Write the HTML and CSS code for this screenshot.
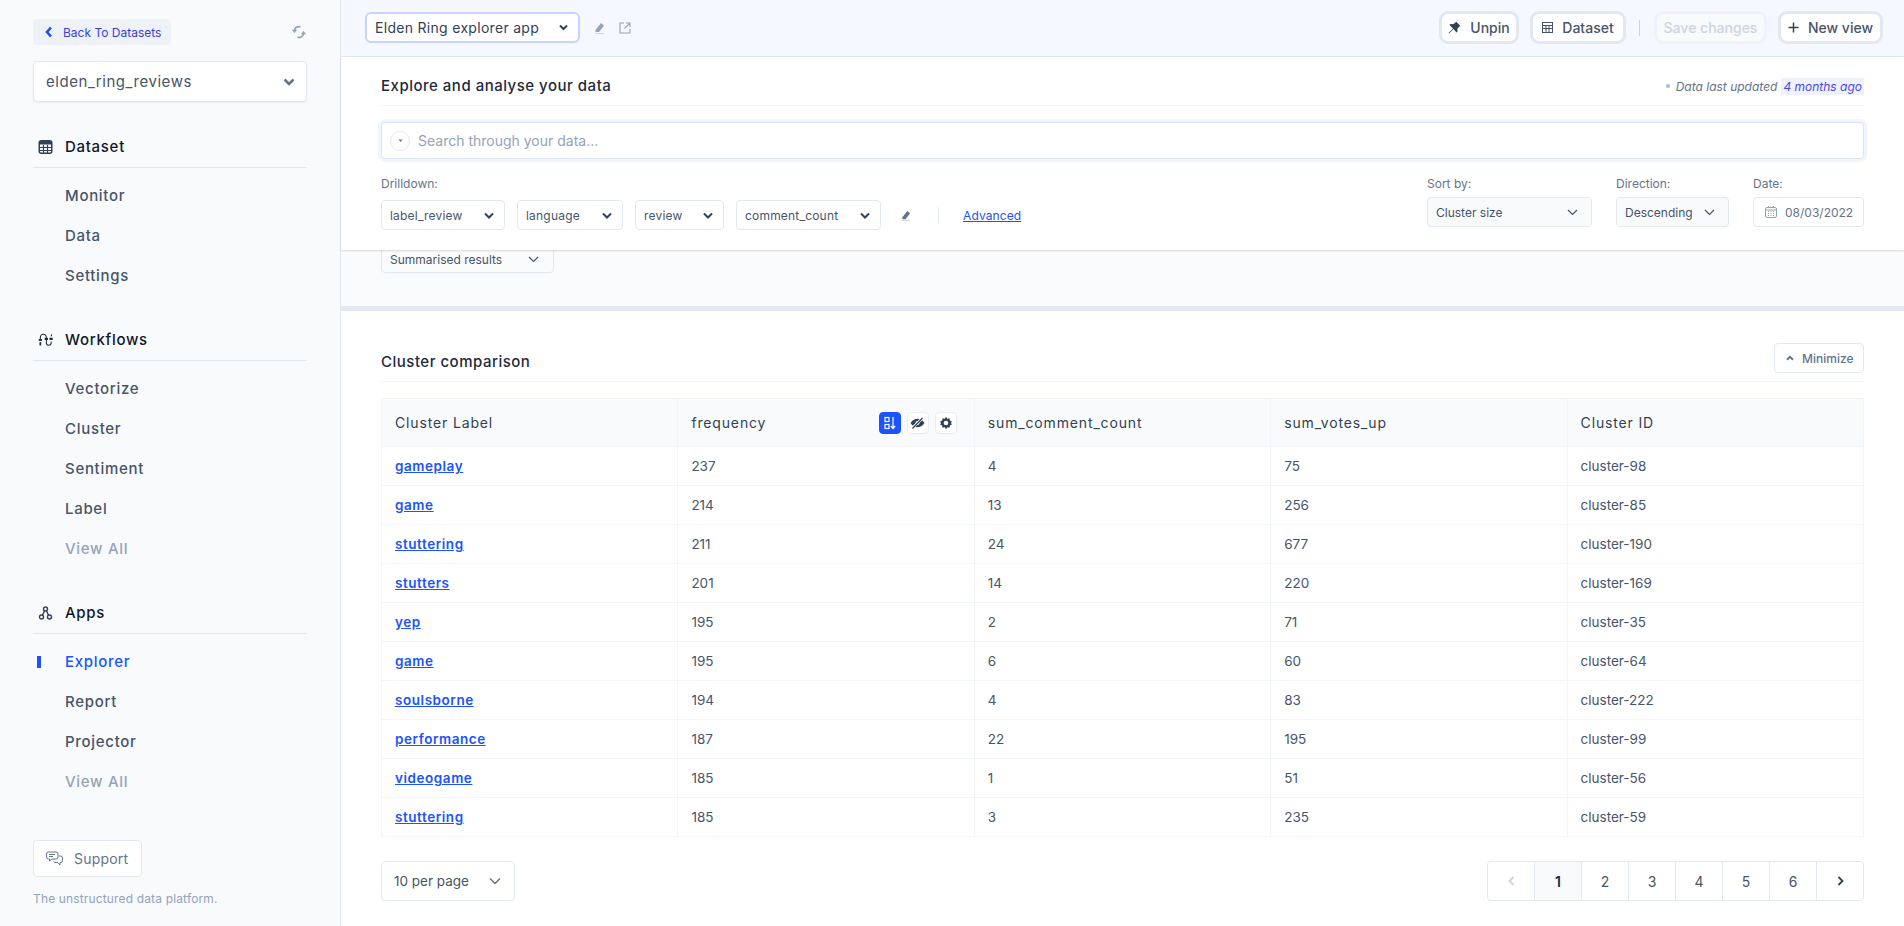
FILE: index.html
```html
<!DOCTYPE html>
<html lang="en">
<head>
<meta charset="UTF-8">
<title>Explorer</title>
<link rel="stylesheet" href="styles.css">
</head>
<body>
<div class="app">

<aside class="sidebar">
  <div class="side-top">
    <a class="back"><svg width="8" height="12" viewBox="0 0 8 12"><path d="M6 1.500 2 6l4 4.500" fill="none" stroke="#1a4fff" stroke-width="2.600"/></svg>Back To Datasets</a>
    <svg class="sync" width="16" height="14" viewBox="0 0 16 14" fill="none" stroke="#94a3b8" stroke-width="1.800"><path d="M9.500 1.800C6 .8 3.500 3 3.500 6"/><path d="M.8 4.800 3.500 8 6.200 4.800" fill="#94a3b8" stroke="none"/><path d="M6.500 12.200c3.500 1 6-1.200 6-4.200"/><path d="M9.800 9.200 12.500 6l2.700 3.200" fill="#94a3b8" stroke="none"/></svg>
  </div>
  <div class="dataset-select">elden_ring_reviews
    <svg width="12" height="8" viewBox="0 0 12 8"><path d="M1.500 1.500 6 6l4.500-4.500" fill="none" stroke="#64748b" stroke-width="2.600"/></svg>
  </div>

  <div class="side-head">
    <svg width="14" height="14" viewBox="0 0 14 14"><rect x=".75" y=".75" width="12.500" height="12.500" rx="2" fill="none" stroke="#334155" stroke-width="1.500"/><path d="M1 1h12v3.500H1z" fill="#334155"/><path d="M1 7.500h12M1 10.500h12M5 5v8M9 5v8" stroke="#334155" stroke-width="1.200"/></svg>
    Dataset
  </div>
  <a class="side-item">Monitor</a>
  <a class="side-item">Data</a>
  <a class="side-item">Settings</a>

  <div class="side-head">
    <svg width="16" height="14" viewBox="0 0 16 14" fill="none" stroke="#1e293b" stroke-width="1.100"><path d="M2.500 6V4a3.200 3.200 0 0 1 6.400 0v6a2.600 2.600 0 0 0 5.200 0V8.500"/><path d="M13.800 3.200 14.600 1"/><rect x=".8" y="6" width="3.400" height="2" fill="#1e293b" stroke="none"/><rect x="1.600" y="9.200" width="1.800" height="3.600" fill="#1e293b" stroke="none"/><rect x="7.200" y="4.600" width="3.400" height="2.400" fill="#1e293b" stroke="none"/><rect x="12.300" y="4.600" width="3.400" height="2.400" fill="#1e293b" stroke="none"/></svg>
    Workflows
  </div>
  <a class="side-item">Vectorize</a>
  <a class="side-item">Cluster</a>
  <a class="side-item">Sentiment</a>
  <a class="side-item">Label</a>
  <a class="side-item muted">View All</a>

  <div class="side-head">
    <svg width="14" height="14" viewBox="0 0 14 14" fill="none" stroke="#334155" stroke-width="1.400"><circle cx="7" cy="3" r="2"/><circle cx="3" cy="11" r="2"/><circle cx="11" cy="11" r="2"/><path d="M6 4.800 4 9.200M8 4.800l2 4.400"/></svg>
    Apps
  </div>
  <a class="side-item active">Explorer</a>
  <a class="side-item">Report</a>
  <a class="side-item">Projector</a>
  <a class="side-item muted">View All</a>

  <a class="support">
    <svg width="17" height="16" viewBox="0 0 17 16" fill="none" stroke="#64748b" stroke-width="1"><path d="M2.500 1h7.500a2 2 0 0 1 2 2v3a2 2 0 0 1-2 2H6l-2.500 2V8h-1a2 2 0 0 1-2-2V3a2 2 0 0 1 2-2z"/><path d="M3 3.500h6M3 5.500h4"/><path d="M13 5h1.500a2 2 0 0 1 2 2v2.500a2 2 0 0 1-2 2H14v2.500L11.500 11.500H9a2 2 0 0 1-1.500-1"/></svg>
    Support
  </a>
  <div class="tagline">The unstructured data platform.</div>
</aside>

<main class="main">

  <header class="topbar">
    <div class="app-select">Elden Ring explorer app
      <svg width="9" height="7" viewBox="0 0 9 7"><path d="M1 1.500 4.500 5 8 1.500" fill="none" stroke="#334155" stroke-width="2"/></svg>
    </div>
    <svg class="edit" width="11" height="12" viewBox="0 0 11 12"><path d="M7 1l3 2.500-5 6.500H1.500V8z" fill="#94a3b8"/><path d="M1 11.500h9" stroke="#cbd5e1"/></svg>
    <svg class="open" width="12" height="12" viewBox="0 0 12 12" fill="none" stroke="#94a3b8" stroke-width="1.100"><path d="M5 1H1v10h10V7"/><path d="M7 1h4v4M11 1 5.500 6.500"/></svg>
    <div class="top-actions">
      <a class="halo-btn w-unpin">
        <svg width="13" height="13" viewBox="0 0 13 13"><path d="M8 .5l4.500 4.500-1.200.6-2 2.400.2 2.500-1 1L5.500 8 1 12.500l-.5-.5L5 7.500 1.500 4l1-1 2.500.3L7.400 1.700z" fill="#334155"/></svg>
        Unpin</a>
      <a class="halo-btn w-data">
        <svg width="11" height="11" viewBox="0 0 11 11" fill="none" stroke="#475569"><rect x=".5" y=".5" width="10" height="10"/><path d="M.5 3.500h10M.5 6.500h10M4 3.500v7M7 3.500v7"/></svg>
        Dataset</a>
      <span class="top-sep"></span>
      <a class="halo-btn off w-save">Save changes</a>
      <a class="halo-btn w-new">
        <svg width="11" height="11" viewBox="0 0 11 11"><path d="M5.500 .5v10M.5 5.500h10" stroke="#334155" stroke-width="1.500"/></svg>
        New view</a>
    </div>
  </header>

  <section class="panel">
    <div class="panel-title">
      <h2>Explore and analyse your data</h2>
      <div class="updated"><i class="dot"></i>Data last updated <span class="ago">4 months ago</span></div>
    </div>

    <div class="search">
      <span class="search-toggle"><svg width="5" height="4" viewBox="0 0 5 4"><path d="M.5 .5 2.500 3 4.500 .5z" fill="#64748b"/></svg></span>
      Search through your data...
    </div>

    <div class="filters">
      <div>
        <label>Drilldown:</label>
        <div class="drill-row">
          <div class="drill w-label">label_review<svg width="10" height="7" viewBox="0 0 10 7"><path d="M1 1.500 5 5.500l4-4" fill="none" stroke="#334155" stroke-width="2"/></svg></div>
          <div class="drill w-lang">language<svg width="10" height="7" viewBox="0 0 10 7"><path d="M1 1.500 5 5.500l4-4" fill="none" stroke="#334155" stroke-width="2"/></svg></div>
          <div class="drill w-review">review<svg width="10" height="7" viewBox="0 0 10 7"><path d="M1 1.500 5 5.500l4-4" fill="none" stroke="#334155" stroke-width="2"/></svg></div>
          <div class="drill w-count">comment_count<svg width="10" height="7" viewBox="0 0 10 7"><path d="M1 1.500 5 5.500l4-4" fill="none" stroke="#334155" stroke-width="2"/></svg></div>
          <svg class="drill-edit" width="10" height="11" viewBox="0 0 11 12"><path d="M7 1l3 2.500-5 6.500H1.500V8z" fill="#64748b"/><path d="M1 11.500h9" stroke="#cbd5e1"/></svg>
          <span class="drill-sep"></span>
          <a class="advanced">Advanced</a>
        </div>
      </div>
      <div class="sorters">
        <div>
          <label>Sort by:</label>
          <div class="sort w-sort">Cluster size<svg width="11" height="7" viewBox="0 0 11 7"><path d="M1 1l4.500 4.500L10 1" fill="none" stroke="#475569" stroke-width="1.200"/></svg></div>
        </div>
        <div>
          <label>Direction:</label>
          <div class="sort w-dir">Descending<svg width="11" height="7" viewBox="0 0 11 7"><path d="M1 1l4.500 4.500L10 1" fill="none" stroke="#475569" stroke-width="1.200"/></svg></div>
        </div>
        <div>
          <label>Date:</label>
          <div class="sort date"><svg width="12" height="12" viewBox="0 0 12 12" fill="none" stroke="#94a3b8"><rect x=".5" y="1.500" width="11" height="10" rx="1.500"/><path d="M.5 4h11M3 5.500h1M5.500 5.500h1M8 5.500h1M3 7.500h1M5.500 7.500h1M8 7.500h1M3 9.500h1M5.500 9.500h1M8 9.500h1M3.500 0v2M8.500 0v2"/></svg>08/03/2022</div>
        </div>
      </div>
    </div>
  </section>

  <section class="summary">
    <div class="summary-select">Summarised results<svg width="11" height="7" viewBox="0 0 11 7"><path d="M1 1l4.500 4.500L10 1" fill="none" stroke="#475569" stroke-width="1.200"/></svg></div>
  </section>

  <section class="compare">
    <div class="compare-head">
      <h2>Cluster comparison</h2>
      <a class="minimize"><svg width="8" height="6" viewBox="0 0 8 6"><path d="M1 4.800 4 1.800l3 3" fill="none" stroke="#64748b" stroke-width="2"/></svg>Minimize</a>
    </div>

    <table>
      <thead>
        <tr>
          <th>Cluster Label</th>
          <th>
            <div class="th-icons">
              <span>frequency</span>
              <div class="tools">
                <i class="tool on"><svg width="12" height="14" viewBox="0 0 12 14" fill="none" stroke="#fff" stroke-width="1.200"><rect x="1" y="1.500" width="4" height="4"/><rect x="1" y="8.500" width="4" height="4"/><path d="M9 1v11M6.800 10 9 12.500 11.200 10"/></svg></i>
                <i class="tool"><svg width="15" height="12" viewBox="0 0 15 12"><path d="M.5 6C2.500 3 5 1.800 7.500 1.800S12.500 3 14.500 6c-2 3-4.500 4.200-7 4.200S2.500 9 .5 6z" fill="#334155"/><circle cx="7.500" cy="6" r="2" fill="#fff"/><path d="M2 11.500 13 .5" stroke="#fff" stroke-width="2.600"/><path d="M2.500 11.500 12.500 1" stroke="#334155" stroke-width="1.200"/></svg></i>
                <i class="tool"><svg width="14" height="14" viewBox="0 0 14 14"><path d="M7 .8l1.200 1.900 2.200-.4.500 2.200 2 1L12 7l.9 1.500-2 1-.5 2.200-2.200-.4L7 13.200l-1.200-1.900-2.200.4-.5-2.200-2-1L2 7l-.9-1.500 2-1 .5-2.200 2.200.4z" fill="#334155"/><circle cx="7" cy="7" r="2.300" fill="#fff"/></svg></i>
              </div>
            </div>
          </th>
          <th>sum_comment_count</th>
          <th>sum_votes_up</th>
          <th>Cluster ID</th>
        </tr>
      </thead>
      <tbody>
        <tr><td><a>gameplay</a></td><td>237</td><td>4</td><td>75</td><td>cluster-98</td></tr>
        <tr><td><a>game</a></td><td>214</td><td>13</td><td>256</td><td>cluster-85</td></tr>
        <tr><td><a>stuttering</a></td><td>211</td><td>24</td><td>677</td><td>cluster-190</td></tr>
        <tr><td><a>stutters</a></td><td>201</td><td>14</td><td>220</td><td>cluster-169</td></tr>
        <tr><td><a>yep</a></td><td>195</td><td>2</td><td>71</td><td>cluster-35</td></tr>
        <tr><td><a>game</a></td><td>195</td><td>6</td><td>60</td><td>cluster-64</td></tr>
        <tr><td><a>soulsborne</a></td><td>194</td><td>4</td><td>83</td><td>cluster-222</td></tr>
        <tr><td><a>performance</a></td><td>187</td><td>22</td><td>195</td><td>cluster-99</td></tr>
        <tr><td><a>videogame</a></td><td>185</td><td>1</td><td>51</td><td>cluster-56</td></tr>
        <tr><td><a>stuttering</a></td><td>185</td><td>3</td><td>235</td><td>cluster-59</td></tr>
      </tbody>
    </table>

    <div class="table-foot">
      <div class="per-page">10 per page<svg width="12" height="8" viewBox="0 0 12 8"><path d="M1 1.500l5 5 5-5" fill="none" stroke="#64748b" stroke-width="1.500"/></svg></div>
      <div class="pager">
        <a class="faint"><svg width="7" height="10" viewBox="0 0 7 10"><path d="M5.500 1 1.500 5l4 4" fill="none" stroke="#cbd5e1" stroke-width="1.800"/></svg></a>
        <a class="current">1</a>
        <a>2</a>
        <a>3</a>
        <a>4</a>
        <a>5</a>
        <a>6</a>
        <a><svg width="7" height="10" viewBox="0 0 7 10"><path d="M1.500 1l4 4-4 4" fill="none" stroke="#334155" stroke-width="1.800"/></svg></a>
      </div>
    </div>
  </section>

</main>
</div>
</body>
</html>
```
FILE: styles.css
```css
*{box-sizing:border-box;}

body{
    margin:0;
    font-family:Inter,"Liberation Sans",sans-serif;
    color:#334155;
    background:#fff;
}
a{cursor:pointer;}
h2{margin:0;font-size:15px;font-weight:500;letter-spacing:.5px;color:#1e293b;}

.app{display:flex;min-height:926px;}

/* sidebar */
.sidebar{
    width:341px;
    flex:none;
    padding:19px 33px 0;
    background:#f8fafc;
    border-right:1px solid #e2e8f0;
    display:flex;
    flex-direction:column;
}
.side-top{display:flex;align-items:center;justify-content:space-between;height:26px;}
.back{
    display:flex;
    align-items:center;
    gap:10px;
    height:26px;
    width:138px;
    padding-left:12px;
    border-radius:4px;
    background:#eef2f7;
    color:#3b3fd8;
    font-size:12px;
    white-space:nowrap;
}
.dataset-select{
    margin-top:16px;
    height:41px;
    padding:0 11px 0 12px;
    display:flex;
    align-items:center;
    justify-content:space-between;
    background:#fff;
    border:1px solid #e2e8f0;
    border-radius:4px;
    box-shadow:0 1px 2px rgba(15,23,42,.06);
    font-size:15px;
    letter-spacing:.55px;
    color:#475569;
}
.side-head{
    margin-top:25px;
    height:40px;
    display:flex;
    align-items:center;
    gap:12px;
    padding:0 0 2px 5px;
    border-bottom:1px solid #e2e8f0;
    font-size:15px;
    font-weight:500;
    letter-spacing:.7px;
    color:#0f172a;
}
.side-head svg{width:15px;flex:none;}
.dataset-select + .side-head{margin-top:26px;}
.side-head + .side-item{margin-top:8px;}
.side-item{
    position:relative;
    display:block;
    height:40px;
    line-height:40px;
    padding-left:32px;
    font-size:15px;
    font-weight:500;
    letter-spacing:.7px;
    color:#475569;
}
.side-item.muted{color:#94a3b8;}
.side-item.active{color:#1a53ff;}
.side-item.active:before{
    content:"";
    position:absolute;
    left:4px;
    top:14px;
    width:4px;
    height:12px;
    background:#1a53ff;
}
.support{
    margin-top:38px;
    width:109px;
    height:37px;
    display:flex;
    align-items:center;
    gap:11px;
    padding-left:12px;
    background:#fff;
    border:1px solid #e2e8f0;
    border-radius:4px;
    font-size:14px;
    letter-spacing:.2px;
    color:#64748b;
}
.tagline{margin-top:14px;font-size:12px;letter-spacing:.15px;color:#94a3b8;white-space:nowrap;}

/* top bar */
.main{flex:1;min-width:0;display:flex;flex-direction:column;}
.topbar{
    height:57px;
    flex:none;
    display:flex;
    align-items:center;
    padding:0 21px 1px 24px;
    background:#f5f8ff;
    border-bottom:1px solid #e0e7f5;
}
.app-select{
    width:215px;
    height:31px;
    display:flex;
    align-items:center;
    justify-content:space-between;
    padding:0 10px 0 8px;
    background:#fff;
    border:2px solid #c7d2fe;
    border-radius:6px;
    font-size:14px;
    letter-spacing:.3px;
    color:#334155;
    white-space:nowrap;
}
.edit{margin-left:14px;}
.open{margin-left:14px;}
.top-actions{margin-left:auto;display:flex;align-items:center;}
.halo-btn{
    height:33px;
    display:flex;
    align-items:center;
    justify-content:center;
    gap:9px;
    background:#fff;
    border:3px solid #e2e8f0;
    border-radius:9px;
    font-size:14px;
    font-weight:500;
    color:#475569;
    white-space:nowrap;
    margin-left:11px;
}
.w-unpin{width:80px;}
.w-data{width:96px;}
.w-save{width:113px;margin-left:0;}
.w-new{width:105px;}
.halo-btn.off{color:#cbd5e1;background:#f8fafc;border-color:#eef2fa;}
.top-sep{width:1px;height:16px;background:#cbd5e1;margin-left:13px;margin-right:14px;}

/* explore panel */
.panel{
    position:relative;
    z-index:1;
    padding:0 40px 20px;
    background:#fff;
    box-shadow:0 1px 2px rgba(100,116,139,.25);
}
.panel-title{
    height:49px;
    display:flex;
    align-items:center;
    justify-content:space-between;
    padding-top:8px;
    border-bottom:1px solid #f1f5f9;
}
.updated{display:flex;align-items:center;font-size:12px;font-style:italic;color:#64748b;padding-top:2px;}
.dot{width:4px;height:4px;border-radius:50%;background:#a5b4fc;margin-right:6px;}
.ago{margin-left:4px;padding:1px 2px;background:#eef2ff;color:#4f46e5;}
.search{
    margin-top:16px;
    height:37px;
    display:flex;
    align-items:center;
    gap:8px;
    padding-left:8px;
    background:#fff;
    border:1px solid #dbe4f0;
    border-radius:4px;
    box-shadow:0 0 0 3px #eff6ff;
    font-size:14px;
    color:#94a3b8;
}
.search-toggle{
    width:20px;
    height:20px;
    display:flex;
    align-items:center;
    justify-content:center;
    border:1px solid #e2e8f0;
    border-radius:50%;
}
.filters{display:flex;justify-content:space-between;margin-top:17px;}
label{display:block;height:16px;line-height:16px;font-size:12px;color:#64748b;}
.drill-row{display:flex;align-items:center;margin-top:8px;}
.drill{
    height:30px;
    display:flex;
    align-items:center;
    justify-content:space-between;
    padding:0 10px 0 8px;
    margin-right:12px;
    border:1px solid #e2e8f0;
    border-radius:4px;
    font-size:12px;
    letter-spacing:.2px;
    color:#475569;
}
.w-label{width:124px;}
.w-lang{width:106px;}
.w-review{width:89px;}
.w-count{width:145px;}
.drill-edit{margin-left:8px;}
.drill-sep{width:1px;height:16px;background:#e2e8f0;margin-left:27px;}
.advanced{margin-left:24px;font-size:12px;letter-spacing:.1px;color:#1a53ff;text-decoration:underline;}
.sorters{display:flex;gap:24px;}
.sort{
    margin-top:5px;
    height:30px;
    display:flex;
    align-items:center;
    justify-content:space-between;
    padding:0 13px 0 8px;
    background:#f8fafc;
    border:1px solid #e2e8f0;
    border-radius:4px;
    font-size:12px;
    color:#475569;
}
.w-sort{width:165px;}
.w-dir{width:113px;}
.sort.date{
    width:111px;
    justify-content:flex-start;
    gap:8px;
    padding:0 0 0 11px;
    background:#fff;
    color:#64748b;
}

/* summarised strip */
.summary{
    height:61px;
    flex:none;
    padding:0 40px;
    background:#fafbfd;
    border-bottom:5px solid #e2e8f0;
}
.summary-select{
    width:173px;
    height:38px;
    margin-top:-15px;
    padding:10px 14px 0 8px;
    display:flex;
    align-items:center;
    justify-content:space-between;
    border:1px solid #e2e8f0;
    border-radius:4px;
    font-size:12px;
    color:#475569;
}

/* cluster table */
.compare{flex:1;padding:32px 40px 0;background:#fff;}
.compare-head{
    height:39px;
    display:flex;
    justify-content:space-between;
    padding-bottom:8px;
    border-bottom:1px solid #f1f5f9;
}
.compare-head h2{line-height:38px;}
.minimize{
    width:90px;
    height:30px;
    display:flex;
    align-items:center;
    gap:8px;
    padding-left:11px;
    border:1px solid #e2e8f0;
    border-radius:4px;
    font-size:12px;
    font-weight:500;
    color:#64748b;
}
table{
    width:100%;
    margin-top:16px;
    border-collapse:collapse;
    table-layout:fixed;
    font-size:13.500px;
}
th,td{
    padding:0 13px;
    border:1px solid #f1f5f9;
    text-align:left;
    color:#475569;
}
th{
    height:48px;
    background:#f8fafc;
    font-size:14px;
    font-weight:400;
    color:#334155;
    letter-spacing:.85px;
}
td{height:39px;}
td a{color:#1a53ff;font-weight:600;letter-spacing:.55px;text-decoration:underline;}
.th-icons{display:flex;align-items:center;justify-content:space-between;margin-right:4px;}
.tools{display:flex;gap:6px;}
.tool{
    width:22px;
    height:22px;
    display:flex;
    align-items:center;
    justify-content:center;
    background:#fff;
    border:1px solid #e8edf4;
    border-radius:4px;
}
.tool.on{background:#1a53ff;border-color:#1a53ff;}

.table-foot{display:flex;justify-content:space-between;margin-top:24px;}
.per-page{
    width:134px;
    height:40px;
    display:flex;
    align-items:center;
    justify-content:space-between;
    padding:0 13px 0 12px;
    border:1px solid #e2e8f0;
    border-radius:4px;
    font-size:13.500px;
    color:#475569;
}
.pager{display:flex;width:377px;height:40px;border:1px solid #e2e8f0;border-radius:4px;}
.pager a{
    flex:1;
    display:flex;
    align-items:center;
    justify-content:center;
    border-right:1px solid #e2e8f0;
    font-size:14px;
    color:#475569;
}
.pager a:last-child{border-right:none;}
.pager .current{background:#f8fafc;color:#1e293b;font-weight:600;}
```
